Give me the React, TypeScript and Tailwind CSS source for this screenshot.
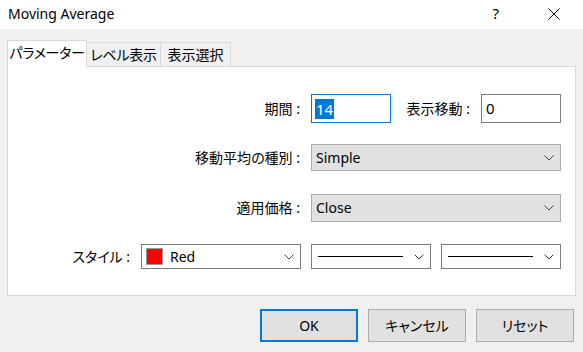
import React from "react";

const FONT = "[font-family:'Noto_Sans','Noto_Sans_CJK_JP',sans-serif] [font-feature-settings:'palt']";

function Chevron() {
  return (
    <svg width="10" height="6" viewBox="0 0 10 6" className="shrink-0">
      <path d="M0.5 0.5 L5 5 L9.5 0.5" fill="none" stroke="#404040" strokeWidth="1" />
    </svg>
  );
}

function GraySelect({ value }: { value: string }) {
  return (
    <div className="w-[250px] h-full flex items-center justify-between bg-[#e1e1e1] border border-[#adadad] pl-[4px] pr-[6px]">
      <span className="text-[14px] leading-none text-black">{value}</span>
      <Chevron />
    </div>
  );
}

function LineSelect() {
  return (
    <div className="w-[120px] h-full flex items-center justify-between bg-white border border-[#7a7a7a] pl-[6px] pr-[6px]">
      <div className="w-[85px] h-px bg-black" />
      <Chevron />
    </div>
  );
}

export default function App() {
  return (
    <div className={`w-[583px] h-[352px] bg-[#f0f0f0] flex flex-col overflow-hidden text-black whitespace-nowrap ${FONT}`}>
      {/* Title bar */}
      <div className="h-[29px] bg-white flex items-center shrink-0">
        <span className="ml-[8px] text-[14px] leading-none pb-[2px]">Moving Average</span>
        <span className="ml-auto mr-[49px] text-[15px] leading-none pb-[2px]">?</span>
        <svg width="12" height="12" viewBox="0 0 12 12" className="mr-[23px] mb-[2px]">
          <path d="M0.5 0.5 L11.5 11.5 M11.5 0.5 L0.5 11.5" stroke="#000" strokeWidth="1" />
        </svg>
      </div>

      {/* Tabs */}
      <div className="mt-[11px] ml-[7px] flex items-end h-[26px] relative z-10">
        <div className="w-[80px] h-[27px] -mb-px bg-white border border-b-0 border-[#d9d9d9] flex items-center justify-center">
          <span className="text-[14px] leading-none pb-[2px] tracking-[-0.3px]">パラメーター</span>
        </div>
        <div className="w-[74px] h-[24px] bg-[#f0f0f0] border border-l-0 border-b-0 border-[#d9d9d9] flex items-center justify-center">
          <span className="text-[14px] leading-none tracking-[-0.3px]">レベル表示</span>
        </div>
        <div className="w-[70px] h-[24px] bg-[#f0f0f0] border border-l-0 border-b-0 border-[#d9d9d9] flex items-center justify-center">
          <span className="text-[14px] leading-none">表示選択</span>
        </div>
      </div>

      {/* Panel */}
      <div className="ml-[7px] w-[569px] h-[230px] bg-white border border-[#d9d9d9] flex flex-col items-end pr-[14px] pt-[27px]">
        {/* Row 1 */}
        <div className="h-[29px] flex items-center">
          <span className="text-[14px] leading-none mr-[11px]">期間 :</span>
          <div className="w-[80px] h-full border border-[#0078d7] bg-white flex items-center pl-[3px]">
            <span className="bg-[#0078d7] text-white text-[15px] leading-[20px] h-[20px] px-[1px]">14</span>
          </div>
          <div className="w-[90px] flex justify-end pr-[11px]">
            <span className="text-[14px] leading-none">表示移動 :</span>
          </div>
          <div className="w-[80px] h-full border border-[#7a7a7a] bg-white flex items-center pl-[4px]">
            <span className="text-[15px] leading-none">0</span>
          </div>
        </div>

        {/* Row 2 */}
        <div className="h-[27px] mt-[21px] flex items-center">
          <span className="text-[14px] leading-none mr-[11px]">移動平均の種別 :</span>
          <GraySelect value="Simple" />
        </div>

        {/* Row 3 */}
        <div className="h-[28px] mt-[23px] flex items-center">
          <span className="text-[14px] leading-none mr-[11px]">適用価格 :</span>
          <GraySelect value="Close" />
        </div>

        {/* Row 4 */}
        <div className="h-[25px] mt-[22px] flex items-center gap-[10px]">
          <span className="text-[14px] leading-none mr-[1px]">スタイル :</span>
          <div className="w-[160px] h-full flex items-center bg-white border border-[#7a7a7a] pl-[4px] pr-[6px]">
            <div className="w-[17px] h-[17px] bg-[#ff0000] border border-[#9a9a9a] shrink-0" />
            <span className="ml-[7px] text-[14px] leading-none">Red</span>
            <div className="ml-auto"><Chevron /></div>
          </div>
          <LineSelect />
          <LineSelect />
        </div>
      </div>

      {/* Buttons */}
      <div className="mt-[13px] flex justify-end gap-[10px] pr-[9px]">
        <div className="w-[98px] h-[33px] bg-[#e1e1e1] border-2 border-[#0078d7] flex items-center justify-center">
          <span className="text-[14px] leading-none">OK</span>
        </div>
        <div className="w-[98px] h-[33px] bg-[#e1e1e1] border border-[#adadad] flex items-center justify-center">
          <span className="text-[14px] leading-none">キャンセル</span>
        </div>
        <div className="w-[98px] h-[33px] bg-[#e1e1e1] border border-[#adadad] flex items-center justify-center">
          <span className="text-[14px] leading-none">リセット</span>
        </div>
      </div>
    </div>
  );
}
